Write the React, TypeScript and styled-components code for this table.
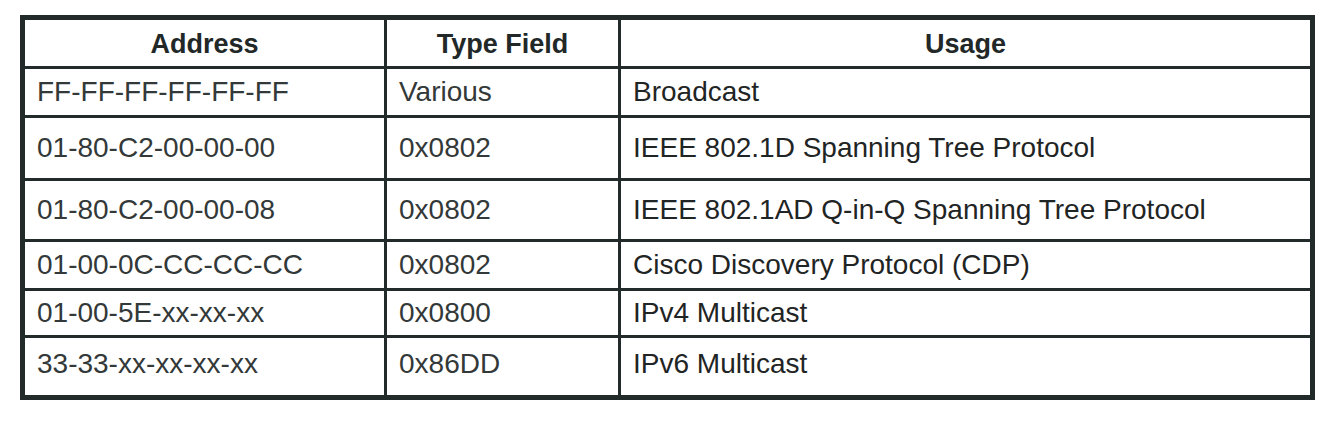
import React from "react";
import styled, { createGlobalStyle } from "styled-components";

const GlobalStyle = createGlobalStyle`
  html, body {
    margin: 0;
    padding: 0;
    background: #ffffff;
  }
  body {
    font-family: "Liberation Sans", Arial, Helvetica, sans-serif;
  }
`;

const Page = styled.div`
  padding: 15px 0 0 20px;
  width: 1329px;
  height: 427px;
  box-sizing: border-box;
  background: #ffffff;
`;

const Grid = styled.div`
  width: 1295px;
  box-sizing: border-box;
  display: grid;
  grid-template-columns: 359px 231px 1fr;
  grid-template-rows: 46px 46px 60px 58px 46px 44px 57px;
  gap: 3px;
  border: 5px solid #232a2a;
  background: #232a2a;
`;

const HeadCell = styled.div`
  background: #ffffff;
  display: flex;
  align-items: center;
  justify-content: center;
  padding-top: 2px;
  font-weight: 700;
  font-size: 27px;
  color: #222828;
`;

const Cell = styled.div<{ $dim?: boolean; $tall?: boolean }>`
  background: #ffffff;
  display: flex;
  align-items: center;
  padding-left: 12px;
  padding-bottom: ${(p) => (p.$tall ? "5px" : "0")};
  font-size: 28px;
  color: ${(p) => (p.$dim ? "#333838" : "#1f2424")};
`;

const rows: [string, string, string][] = [
  ["FF-FF-FF-FF-FF-FF", "Various", "Broadcast"],
  ["01-80-C2-00-00-00", "0x0802", "IEEE 802.1D Spanning Tree Protocol"],
  ["01-80-C2-00-00-08", "0x0802", "IEEE 802.1AD Q-in-Q Spanning Tree Protocol"],
  ["01-00-0C-CC-CC-CC", "0x0802", "Cisco Discovery Protocol (CDP)"],
  ["01-00-5E-xx-xx-xx", "0x0800", "IPv4 Multicast"],
  ["33-33-xx-xx-xx-xx", "0x86DD", "IPv6 Multicast"],
];

export default function App() {
  return (
    <>
      <GlobalStyle />
      <Page>
        <Grid>
          <HeadCell>Address</HeadCell>
          <HeadCell>Type Field</HeadCell>
          <HeadCell>Usage</HeadCell>
          {rows.map((r, i) => {
            const tall = i === rows.length - 1;
            return (
              <React.Fragment key={i}>
                <Cell $dim $tall={tall}>{r[0]}</Cell>
                <Cell $dim $tall={tall}>{r[1]}</Cell>
                <Cell $tall={tall}>{r[2]}</Cell>
              </React.Fragment>
            );
          })}
        </Grid>
      </Page>
    </>
  );
}
